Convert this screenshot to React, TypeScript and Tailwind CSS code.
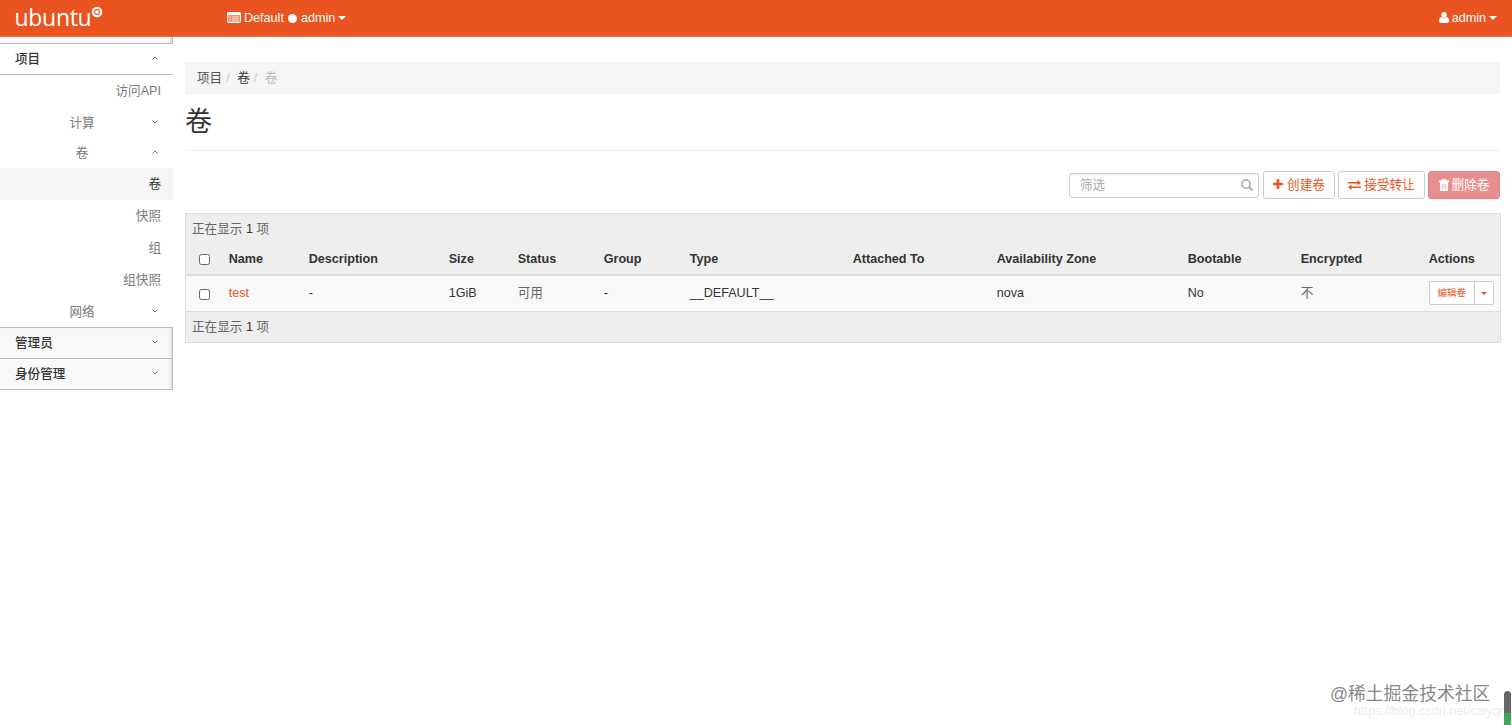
import React from "react";
import clsx from "clsx";

const columns = [
  { name: "Name", width: "w-[80px]" },
  { name: "Description", width: "w-[140px]" },
  { name: "Size", width: "w-[69px]" },
  { name: "Status", width: "w-[86px]" },
  { name: "Group", width: "w-[86px]" },
  { name: "Type", width: "w-[163px]" },
  { name: "Attached To", width: "w-[144px]" },
  { name: "Availability Zone", width: "w-[191px]" },
  { name: "Bootable", width: "w-[113px]" },
  { name: "Encrypted", width: "w-[128px]" },
  { name: "Actions", width: "w-[78px]" },
];

const volume = ["test", "-", "1GiB", "可用", "-", "__DEFAULT__", "", "nova", "No", "不"];

function Caret({ className }: { className?: string }) {
  return (
    <svg viewBox="0 0 8 4" className={clsx("shrink-0", className)} fill="currentColor">
      <path d="M0 0h8L4 4z" />
    </svg>
  );
}

function Chevron({ up }: { up?: boolean }) {
  return (
    <svg viewBox="0 0 6 4" className="mb-[2px] h-1 w-1.5 shrink-0" fill="none" stroke="#777" strokeWidth="1">
      <path d={up ? "M.5 3.5 3 1l2.500 2.500" : "M.5.5 3 3 5.500.5"} />
    </svg>
  );
}

function Logo() {
  return (
    <a href="#" className="flex w-[227px] pl-[14.500px] text-white">
      <span className="-mt-[1px] h-[36px] w-[76px] font-['Open_Sans',sans-serif] text-[23px] leading-[36px] tracking-[-0.3px]">
        ubuntu
      </span>
      <svg viewBox="0 0 12 12" className="mt-[6px] h-[12px] w-[12px]">
        <circle cx="6" cy="6" r="5.300" fill="#fff" />
        <circle cx="6" cy="6" r="2.400" fill="none" stroke="#e95420" strokeWidth="1.100" />
        <g fill="#e95420" stroke="#fff" strokeWidth=".4">
          <circle cx="2.800" cy="6" r=".9" />
          <circle cx="7.600" cy="3.200" r=".9" />
          <circle cx="7.600" cy="8.800" r=".9" />
        </g>
      </svg>
    </a>
  );
}

function Navbar() {
  return (
    <nav className="flex h-[37px] justify-between border-b border-[#e2774f] bg-[#e95420] text-white">
      <div className="flex">
        <Logo />
        <a href="#" className="flex h-[35px] items-center">
          <svg viewBox="0 0 14 11" className="mr-[3px] h-[11px] w-[14px]">
            <rect x=".5" y=".5" width="13" height="10" rx="1" fill="#fff" fillOpacity=".35" stroke="#fff" />
            <path d="M0 1h14v2H0z" fill="#fff" />
            <path d="M2 5h1.500M5 5h7M2 7h1.500M5 7h7M2 9h1.500M5 9h7" stroke="#fff" strokeOpacity=".7" />
          </svg>
          Default
          <span className="mx-[4px] mt-[2px] h-[9px] w-[9px] rounded-full bg-white" />
          admin
          <Caret className="ml-[3px] h-[4px] w-[8px]" />
        </a>
      </div>
      <a href="#" className="mr-[15px] flex h-[35px] items-center">
        <svg viewBox="0 0 10 11" className="mr-[3px] h-[11px] w-[10px]" fill="currentColor">
          <ellipse cx="5" cy="3" rx="2.700" ry="3" />
          <path d="M2.300 5C.6 5.200 0 7 0 9c0 1.300.8 2 1.800 2h6.400c1 0 1.800-.7 1.800-2 0-2-.6-3.800-2.300-4C6.300 6.700 3.700 6.700 2.300 5z" />
        </svg>
        admin
        <Caret className="ml-[3px] h-[4px] w-[8px]" />
      </a>
    </nav>
  );
}

function PanelItem({ label, up, className }: { label: string; up?: boolean; className?: string }) {
  return (
    <div className={clsx("flex items-center justify-between pl-[15px] font-medium text-[#333]", className)}>
      {label}
      <Chevron up={up} />
    </div>
  );
}

function GroupItem({ label, up, className }: { label: string; up?: boolean; className?: string }) {
  return (
    <div className={clsx("flex items-center justify-end pr-[15px]", className)}>
      <span className="w-[26px] text-center">{label}</span>
      <span className="ml-[57px] flex">
        <Chevron up={up} />
      </span>
    </div>
  );
}

function LinkItem({ label, active }: { label: string; active?: boolean }) {
  return (
    <div
      className={clsx(
        "flex h-[32px] items-center justify-end pr-[12px]",
        active && "bg-[#f5f5f5] pb-[1px] text-[#333]"
      )}
    >
      {label}
    </div>
  );
}

function Sidebar() {
  return (
    <aside className="w-[173px] shrink-0 text-[#7a7a7a]">
      <div className="h-[7px] border-r border-b border-[#bbb] bg-[#fdfdfd] shadow-[inset_-2px_0_2px_#ddd]" />
      <PanelItem label="项目" up className="h-[31px] border-b border-[#bbb] pr-[15px]" />
      <LinkItem label="访问API" />
      <GroupItem label="计算" className="h-[31px]" />
      <GroupItem label="卷" up className="h-[30px]" />
      <LinkItem label="卷" active />
      <LinkItem label="快照" />
      <LinkItem label="组" />
      <LinkItem label="组快照" />
      <GroupItem label="网络" className="h-[31px]" />
      <div className="border-r border-[#bbb] bg-[#f9f9f9] shadow-[inset_-2px_0_2px_#e5e5e5]">
        <PanelItem label="管理员" className="h-[31px] border-t border-[#bbb] pr-[14px]" />
        <PanelItem label="身份管理" className="h-[32px] border-y border-[#bbb] pr-[14px]" />
      </div>
    </aside>
  );
}

function Toolbar() {
  return (
    <div className="mt-[20px] flex h-[28px] items-center justify-end gap-[4px]">
      <div className="flex h-[25px] w-[190px] items-center justify-between rounded-[3px] border border-[#ccc] pr-[5px] pl-[10px] text-[#aaa] shadow-[inset_0_1px_1px_rgba(0,0,0,0.075)]">
        筛选
        <svg viewBox="0 0 12 12" className="h-[12px] w-[12px]" fill="none" stroke="#aaa" strokeWidth="1.500">
          <circle cx="5" cy="5" r="4.200" />
          <path d="m8 8 3.600 3.600" strokeWidth="1.800" />
        </svg>
      </div>
      <button className="flex h-[28px] w-[72px] items-center justify-center rounded-[3px] border border-[#ccc] text-[#e95420]">
        <svg viewBox="0 0 10 10" className="mr-[4px] mb-[2px] h-[10px] w-[10px]" fill="currentColor">
          <path d="M3.700 0h2.600v3.700H10v2.600H6.300V10H3.700V6.300H0V3.700h3.700z" />
        </svg>
        创建卷
      </button>
      <button className="-ml-px flex h-[28px] w-[87px] items-center justify-center rounded-[3px] border border-[#ccc] text-[#e95420]">
        <svg viewBox="0 0 13 10" className="mr-[3px] h-[10px] w-[13px]" fill="currentColor">
          <path d="M0 2h9.500V0L13 2.700 9.500 5.300V3.500H0zM13 6.500H3.500v-2L0 7.300 3.500 10V8H13z" />
        </svg>
        接受转让
      </button>
      <button className="-ml-px flex h-[28px] w-[72px] items-center justify-center rounded-[3px] border border-[#df8583] bg-[#e78f8e] text-white">
        <svg viewBox="0 0 10 12" className="mr-[3px] h-[12px] w-[10px]" fill="currentColor">
          <path d="M3 0h4l.8 1.500H10v1.700H0V1.500h2.200zM1 3.200h8V11c0 .6-.4 1-1 1H2c-.6 0-1-.4-1-1z" />
          <path d="M3.300 5v5M5 5v5M6.700 5v5" stroke="#e78f8e" strokeWidth=".6" />
        </svg>
        删除卷
      </button>
    </div>
  );
}

function Checkbox() {
  return <span className="mt-[2px] ml-[13px] block h-[11px] w-[11px] rounded-[2.500px] border border-[#666] bg-white" />;
}

function VolumesTable() {
  return (
    <table className="mt-[14px] w-[1315px] table-fixed border-collapse border border-[#ddd] bg-[#eee] text-left">
      <colgroup>
        <col className="w-[37px]" />
        {columns.map((col) => (
          <col key={col.name} className={col.width} />
        ))}
      </colgroup>
      <thead>
        <tr className="h-[30px]">
          <td colSpan={12} className="pl-[6px] text-[#666]">
            正在显示 <span className="text-[#333]">1</span> 项
          </td>
        </tr>
        <tr className="h-[31px] border-b-2 border-[#ddd]">
          <th>
            <Checkbox />
          </th>
          {columns.map((col) => (
            <th key={col.name} className="pl-[6.200px] font-bold whitespace-nowrap">
              {col.name}
            </th>
          ))}
        </tr>
      </thead>
      <tbody>
        <tr className="h-[37px] border-b border-[#ddd] bg-[#f9f9f9]">
          <td>
            <Checkbox />
          </td>
          {volume.map((value, i) => (
            <td key={i} className={clsx("pl-[6.200px]", i === 0 && "text-[#e95420]", (i === 3 || i === 9) && "text-[#666]")}>
              {value}
            </td>
          ))}
          <td className="pl-[6.200px]">
            <div className="flex h-[24px] w-[65px] rounded-[2px] border border-[#ccc] bg-white text-[9.500px] text-[#e95420]">
              <button className="w-[45px] border-r border-[#ccc]">编辑卷</button>
              <button className="flex flex-1 items-center justify-center">
                <Caret className="h-[3px] w-[6px]" />
              </button>
            </div>
          </td>
        </tr>
      </tbody>
      <tfoot>
        <tr className="h-[31px]">
          <td colSpan={12} className="pl-[6px] text-[#666]">
            正在显示 <span className="text-[#333]">1</span> 项
          </td>
        </tr>
      </tfoot>
    </table>
  );
}

export default function App() {
  return (
    <div className="relative h-[725px] w-[1512px] overflow-hidden bg-white font-['Liberation_Sans','Noto_Sans_CJK_SC',sans-serif] text-[12.600px] leading-[18px] text-[#333]">
      <Navbar />
      <div className="flex">
        <Sidebar />
        <main className="ml-[12px] w-[1315px] pt-[25px]">
          <div className="flex h-[32px] items-center bg-[#f5f5f5] pl-[12px] text-[#555]">
            项目
            <span className="ml-[4px] w-[11px] text-[#ccc]">/</span>
            <span className="text-[#333]">卷</span>
            <span className="ml-[4px] w-[11px] text-[#ccc]">/</span>
            <span className="text-[#bbb]">卷</span>
          </div>
          <h1 className="flex h-[57px] items-center border-b border-[#eee] text-[27px] leading-[30px]">卷</h1>
          <Toolbar />
          <VolumesTable />
        </main>
      </div>
      <div className="absolute top-[682px] left-[1330px] text-[17.800px] leading-[24px] whitespace-nowrap text-[#888]">
        @稀土掘金技术社区
      </div>
      <div className="absolute top-[703px] left-[1354px] text-[12.600px] leading-[16px] whitespace-nowrap text-[#ececec]">
        https://blog.csdn.net/caiyqn
      </div>
      <div className="absolute top-[691px] left-[1504px] h-[40px] w-[7px] overflow-hidden rounded-t-[4px] bg-[#666]">
        <div className="mt-[22px] h-[18px] bg-[#3fa75b]" />
      </div>
    </div>
  );
}
